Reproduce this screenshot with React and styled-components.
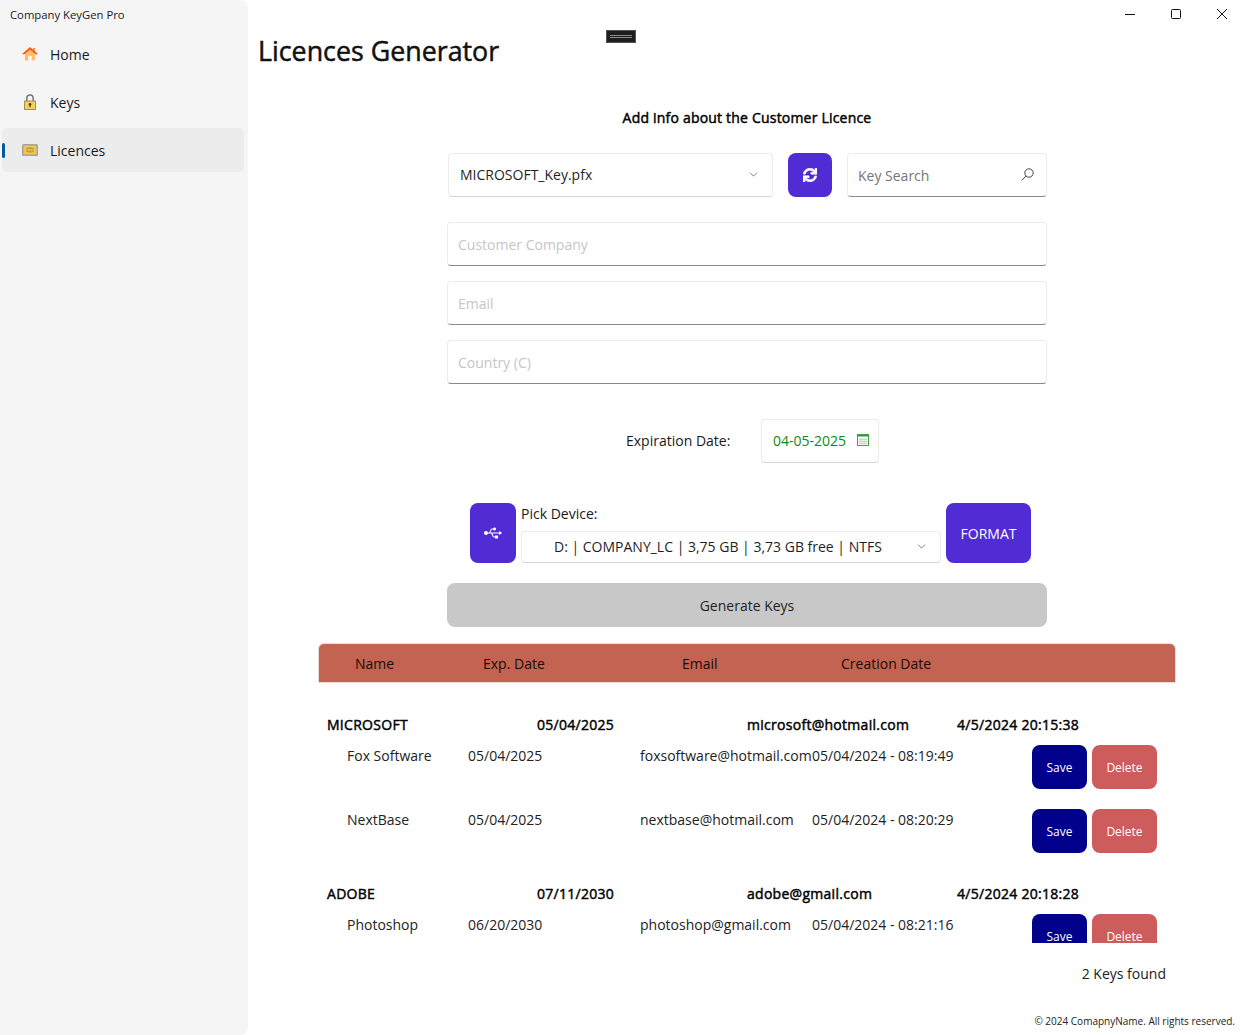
import React from 'react';
import styled, { createGlobalStyle } from 'styled-components';
import { FaSync, FaUsb } from 'react-icons/fa';
import { ChevronDown } from 'lucide-react';

const Global = createGlobalStyle`
  html, body { margin: 0; padding: 0; background: #fff; }
  body { font-family: "Open Sans", "Noto Sans", sans-serif; color: #1a1a1a; font-size: 14px; }
  * { box-sizing: border-box; }
`;

const Page = styled.div`
  position: relative;
  display: flex;
  width: 1243px;
  height: 1035px;
  overflow: hidden;
  background: #fff;
`;
const Sidebar = styled.aside`
  width: 248px;
  flex: none;
  background: #f5f5f5;
  border-radius: 0 8px 8px 0;
  padding: 0 4px 0 2px;
`;
const AppTitle = styled.div`
  height: 32px;
  padding: 7px 0 0 8px;
  font-size: 11.3px;
  line-height: 16px;
`;
const NavList = styled.nav`
  display: flex;
  flex-direction: column;
  gap: 4px;
`;
const NavItem = styled.div`
  position: relative;
  height: 44px;
  display: flex;
  align-items: center;
  gap: 12px;
  padding-left: 20px;
  border-radius: 5px;
  font-size: 14px;
  background: ${p => (p.$active ? '#ececec' : 'transparent')};
  ${p => p.$active && `
    &::before {
      content: '';
      position: absolute;
      left: 0;
      top: 15px;
      width: 3px;
      height: 15px;
      border-radius: 2px;
      background: #005a9e;
    }
  `}
`;
const NavIcon = styled.svg`
  width: 16px;
  height: 16px;
  flex: none;
`;
const Main = styled.main`
  flex: 1;
  min-width: 0;
  display: flex;
  flex-direction: column;
`;
const Title = styled.h1`
  margin: 31px 0 0 10px;
  font-size: 26.8px;
  line-height: 40px;
  font-weight: 400;
  -webkit-text-stroke: 0.5px #111;
  color: #111;
`;
const Form = styled.section`
  width: 600px;
  margin: 37px 0 0 199px;
  display: flex;
  flex-direction: column;
`;
const Heading = styled.h2`
  margin: 0;
  text-align: center;
  font-size: 14px;
  line-height: 20px;
  font-weight: 400;
  letter-spacing: 0.2px;
  -webkit-text-stroke: 0.45px #000;
  color: #000;
`;
const KeyRow = styled.div`
  display: flex;
  margin: 25px 0 0 1px;
  height: 44px;
`;
const Picker = styled.div`
  flex: none;
  width: ${p => p.$w}px;
  height: ${p => p.$h || 44}px;
  display: flex;
  align-items: center;
  padding: 0 ${p => p.$pr || 12}px 2px ${p => p.$pl || 11}px;
  background: #fff;
  border: 1px solid #ececec;
  border-bottom-color: #d4d4d4;
  border-radius: 4px;
  font-size: 14px;
  color: #1f1f1f;
`;
const PickerText = styled.span`
  flex: 1;
  white-space: nowrap;
`;
const Chevron = styled(ChevronDown)`
  width: 13px;
  height: 13px;
  color: #5e5e5e;
  stroke-width: 1.5;
`;
const IconButton = styled.button`
  flex: none;
  width: ${p => p.$w}px;
  height: ${p => p.$h}px;
  margin: ${p => p.$m || 0};
  padding: 0;
  border: 0;
  border-radius: 8px;
  background: #512bd4;
  color: #fff;
  font: inherit;
  display: flex;
  align-items: center;
  justify-content: center;
`;
const SearchBox = styled.div`
  margin-left: 15px;
  width: 200px;
  height: 44px;
  display: flex;
  align-items: center;
  padding: 0 12px 0 10px;
  background: #fff;
  border: 1px solid #ececec;
  border-bottom: 1px solid #8a8a8a;
  border-radius: 4px;
`;
const SearchInput = styled.input`
  flex: 1;
  min-width: 0;
  border: 0;
  outline: 0;
  padding: 0;
  background: transparent;
  font: inherit;
  &::placeholder { color: #767676; opacity: 1; }
`;
const SearchGlyph = styled.svg`
  width: 13px;
  height: 13px;
  flex: none;
  margin-bottom: 2px;
`;
const Fields = styled.div`
  margin-top: 25px;
  display: flex;
  flex-direction: column;
  gap: 15px;
`;
const TextField = styled.input`
  width: 100%;
  height: 44px;
  padding: 0 10px;
  border: 1px solid #ececec;
  border-bottom: 1px solid #8a8a8a;
  border-radius: 4px;
  outline: 0;
  background: #fff;
  font: inherit;
  &::placeholder { color: #c6c6c6; opacity: 1; }
`;
const DateRow = styled.div`
  margin: 35px 0 0 179px;
  display: flex;
  align-items: center;
  height: 44px;
`;
const DateLabel = styled.span`
  width: 135px;
  font-size: 14px;
  margin-bottom: 2px;
`;
const DateText = styled.span`
  flex: 1;
  color: #108a10;
  white-space: nowrap;
`;
const DeviceRow = styled.div`
  margin: 40px 0 0 23px;
  display: flex;
  height: 60px;
`;
const DeviceColumn = styled.div`
  width: 420px;
  margin-left: 5px;
  display: flex;
  flex-direction: column;
  justify-content: space-between;
`;
const DeviceLabel = styled.span`
  line-height: 20px;
  margin-top: 1px;
`;
const CenteredText = styled.span`
  flex: 1;
  white-space: nowrap;
`;
const GenerateButton = styled.button`
  margin-top: 20px;
  width: 600px;
  height: 44px;
  border: 0;
  border-radius: 8px;
  background: #c8c8c8;
  color: #1f1f1f;
  font: inherit;
`;
const TableArea = styled.section`
  width: 858px;
  margin: 16px 0 0 70px;
`;
const TableHead = styled.div`
  height: 40px;
  display: grid;
  grid-template-columns: 128px 199px 159px 1fr;
  align-items: center;
  padding: 0 0 0 36px;
  background: #c36351;
  border: 1px solid #ecdcd8;
  border-radius: 6px 6px 0 0;
  color: #1a0a06;
`;
const Scroller = styled.div`
  height: 260px;
  overflow: hidden;
`;
const Group = styled.div`
  padding-top: ${p => (p.$first ? 32 : 11)}px;
`;
const GroupRow = styled.div`
  display: grid;
  grid-template-columns: 210px 210px 210px 1fr;
  height: 30px;
  padding-left: 9px;
  line-height: 20px;
  font-weight: 400;
  letter-spacing: 0.28px;
  -webkit-text-stroke: 0.45px #000;
  color: #000;
  white-space: nowrap;
`;
const ChildRow = styled.div`
  position: relative;
  height: 64px;
  display: grid;
  grid-template-columns: 121px 172px 172px 220px 1fr;
  padding: 0 19px 0 29px;
  line-height: 20px;
  white-space: nowrap;
  color: #222;
`;
const ChildCell = styled.span`
  padding-top: 1px;
`;
const ActionCell = styled.div`
  display: flex;
  justify-content: flex-end;
  gap: 5px;
  grid-column: 5;
`;
const RowButton = styled.button`
  width: ${p => p.$w}px;
  height: 44px;
  border: 0;
  border-radius: 8px;
  padding: 1px 0 0;
  background: ${p => p.$bg};
  color: #fff;
  font: inherit;
  font-size: 12px;
`;
const KeysFound = styled.div`
  margin: 21px 10px 0 0;
  text-align: right;
  line-height: 20px;
`;
const Footer = styled.footer`
  position: absolute;
  right: 8px;
  bottom: 7px;
  font-size: 10px;
  line-height: 14px;
  color: #222;
`;
const WindowControls = styled.div`
  position: absolute;
  top: 0;
  right: -2px;
  display: flex;
`;
const WindowButton = styled.div`
  width: 46px;
  height: 28px;
  display: flex;
  align-items: center;
  justify-content: center;
`;
const DebugBar = styled.div`
  position: absolute;
  left: 606px;
  top: 30px;
  width: 30px;
  height: 13px;
  background: #1e1e1e;
  border: 1px solid #555;
  display: flex;
  flex-direction: column;
  align-items: center;
  justify-content: center;
  gap: 1px;
  &::before, &::after {
    content: '';
    width: 22px;
    height: 1px;
    background: #8a8a8a;
  }
`;

const HomeIcon = () => (
  <NavIcon viewBox="0 0 16 16">
    <rect x="11" y="2" width="2" height="4" fill="#ff8a3a" />
    <path d="M3 7.5 L8 3.4 L13 7.5 L13 14.5 L9.8 14.5 L9.8 10 L6.2 10 L6.2 14.5 L3 14.5 Z" fill="#ffbe6a" />
    <path d="M8 1 L16 8 L13.8 8.6 L8 3.8 L2.2 8.6 L0 8 Z" fill="#ff5a14" />
  </NavIcon>
);
const LockIcon = () => (
  <NavIcon viewBox="0 0 16 16">
    <path d="M4.8 8 V4.2 a3.2 3.2 0 0 1 6.4 0 V8" fill="none" stroke="#77777a" strokeWidth="1.5" />
    <rect x="2.5" y="7" width="11" height="8.5" fill="#f6cf5c" stroke="#8f7c45" strokeWidth="0.8" />
    <circle cx="8" cy="10.2" r="1.3" fill="#4a3a10" />
    <rect x="7.4" y="10.5" width="1.2" height="2.6" fill="#4a3a10" />
  </NavIcon>
);
const CardIcon = () => (
  <NavIcon viewBox="0 0 16 16">
    <rect x="0" y="2" width="16" height="12" rx="1.5" fill="#a3a3a3" />
    <rect x="1.5" y="3.5" width="13" height="9" rx="1" fill="#f3c548" />
    <path d="M4 6.6 H12 M4 9.2 H12" stroke="#b0923c" strokeWidth="1" />
    <rect x="5.5" y="5.6" width="5" height="4.8" rx="1" fill="none" stroke="#c7a544" strokeWidth="0.8" />
  </NavIcon>
);
const CalendarIcon = () => (
  <svg width="12" height="12" viewBox="0 0 12 12" fill="none">
    <rect x="0.5" y="0.5" width="11" height="11" stroke="#3fa845" />
    <rect x="0.5" y="0.5" width="11" height="2" fill="#2f9e36" />
    <path d="M3 4 V10.5 M5 4 V10.5 M7 4 V10.5 M9 4 V10.5 M1.5 5.5 H10.5 M1.5 7.5 H10.5 M1.5 9.5 H10.5" stroke="#b4dcb6" strokeWidth="0.8" />
  </svg>
);

const groups = [
  {
    name: 'MICROSOFT', date: '05/04/2025', email: 'microsoft@hotmail.com', created: '4/5/2024 20:15:38',
    children: [
      { name: 'Fox Software', date: '05/04/2025', email: 'foxsoftware@hotmail.com', created: '05/04/2024 - 08:19:49' },
      { name: 'NextBase', date: '05/04/2025', email: 'nextbase@hotmail.com', created: '05/04/2024 - 08:20:29' },
    ],
  },
  {
    name: 'ADOBE', date: '07/11/2030', email: 'adobe@gmail.com', created: '4/5/2024 20:18:28',
    children: [
      { name: 'Photoshop', date: '06/20/2030', email: 'photoshop@gmail.com', created: '05/04/2024 - 08:21:16' },
    ],
  },
];

export default function App() {
  return (
    <Page>
      <Global />
      <Sidebar>
        <AppTitle>Company KeyGen Pro</AppTitle>
        <NavList>
          <NavItem><HomeIcon />Home</NavItem>
          <NavItem><LockIcon />Keys</NavItem>
          <NavItem $active><CardIcon />Licences</NavItem>
        </NavList>
      </Sidebar>
      <Main>
        <Title>Licences Generator</Title>
        <Form>
          <Heading>Add info about the Customer Licence</Heading>
          <KeyRow>
            <Picker $w={325}>
              <PickerText>MICROSOFT_Key.pfx</PickerText>
              <Chevron />
            </Picker>
            <IconButton $w={44} $h={44} $m="0 0 0 15px"><FaSync size={14} stroke="currentColor" strokeWidth={24} /></IconButton>
            <SearchBox>
              <SearchInput placeholder="Key Search" />
              <SearchGlyph viewBox="0 0 13 13" fill="none">
                <circle cx="8" cy="5" r="4.2" stroke="#444" strokeWidth="1" />
                <path d="M5 8 L0.8 12.4" stroke="#444" strokeWidth="1" />
              </SearchGlyph>
            </SearchBox>
          </KeyRow>
          <Fields>
            <TextField placeholder="Customer Company" />
            <TextField placeholder="Email" />
            <TextField placeholder="Country (C)" />
          </Fields>
          <DateRow>
            <DateLabel>Expiration Date:</DateLabel>
            <Picker $w={118} $pr={9}>
              <DateText>04-05-2025</DateText>
              <CalendarIcon />
            </Picker>
          </DateRow>
          <DeviceRow>
            <IconButton $w={46} $h={60}><FaUsb size={18} /></IconButton>
            <DeviceColumn>
              <DeviceLabel>Pick Device:</DeviceLabel>
              <Picker $w={420} $h={32} $pl={32} $pr={12}>
                <CenteredText>D: | COMPANY_LC | 3,75 GB | 3,73 GB free | NTFS</CenteredText>
                <Chevron />
              </Picker>
            </DeviceColumn>
            <IconButton $w={85} $h={60} $m="0 0 0 5px">FORMAT</IconButton>
          </DeviceRow>
          <GenerateButton>Generate Keys</GenerateButton>
        </Form>
        <TableArea>
          <TableHead>
            <span>Name</span>
            <span>Exp. Date</span>
            <span>Email</span>
            <span>Creation Date</span>
          </TableHead>
          <Scroller>
            {groups.map((g, i) => (
              <Group key={g.name} $first={i === 0}>
                <GroupRow>
                  <span>{g.name}</span>
                  <span>{g.date}</span>
                  <span>{g.email}</span>
                  <span>{g.created}</span>
                </GroupRow>
                {g.children.map(c => (
                  <ChildRow key={c.name}>
                    <ChildCell>{c.name}</ChildCell>
                    <ChildCell>{c.date}</ChildCell>
                    <ChildCell>{c.email}</ChildCell>
                    <ChildCell>{c.created}</ChildCell>
                    <ActionCell>
                      <RowButton $w={55} $bg="#00008b">Save</RowButton>
                      <RowButton $w={65} $bg="#cd5c5c">Delete</RowButton>
                    </ActionCell>
                  </ChildRow>
                ))}
              </Group>
            ))}
          </Scroller>
          <KeysFound>2 Keys found</KeysFound>
        </TableArea>
      </Main>
      <Footer>© 2024 ComapnyName. All rights reserved.</Footer>
      <DebugBar />
      <WindowControls>
        <WindowButton>
          <svg width="10" height="10" viewBox="0 0 10 10"><path d="M0 5.5 H10" stroke="#111" strokeWidth="1" /></svg>
        </WindowButton>
        <WindowButton>
          <svg width="10" height="10" viewBox="0 0 10 10"><rect x="0.5" y="0.5" width="9" height="9" rx="1" fill="none" stroke="#111" /></svg>
        </WindowButton>
        <WindowButton>
          <svg width="10" height="10" viewBox="0 0 10 10"><path d="M0 0 L10 10 M10 0 L0 10" stroke="#111" strokeWidth="1" /></svg>
        </WindowButton>
      </WindowControls>
    </Page>
  );
}
